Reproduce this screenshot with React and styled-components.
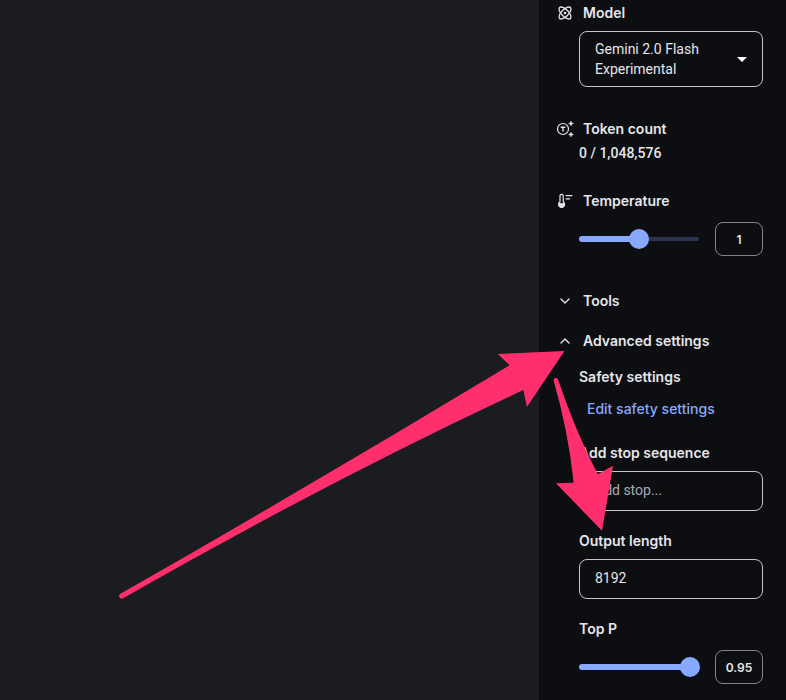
import { useState } from "react";
import styled, { createGlobalStyle } from "styled-components";
import { Atom, ChevronDown, ChevronUp } from "lucide-react";

const colors = {
    page: "#1b1c1f",
    panel: "#0d0e12",
    text: "#e6e6ea",
    muted: "#a9aab0",
    border: "#c4c6cc",
    softBorder: "#85868c",
    primary: "#87a9ff",
    rail: "#2c3350",
    arrow: "#ff2f6d",
};

const fonts = {
    body: 'Roboto, "Open Sans", sans-serif',
    label: 'Inter, "Open Sans", sans-serif',
};

const GlobalStyle = createGlobalStyle`
    * {
        box-sizing: border-box;
    }

    body {
        margin: 0;
        background: ${colors.page};
        color: ${colors.text};
        font-family: ${fonts.body};
        font-size: 14px;
        line-height: 20px;
    }

    button, input, select {
        font: inherit;
        color: inherit;
    }
`;

const PageWrapper = styled.div`
    position: relative;
    display: flex;
    min-height: 100vh;
    overflow: hidden;
`;

const Workspace = styled.main`
    flex: 1;
    background: ${colors.page};
`;

const Panel = styled.aside`
    display: flex;
    flex-direction: column;
    width: 247px;
    padding: 3px 23px 16px 18px;
    background: ${colors.panel};
`;

const Section = styled.section`
    display: flex;
    flex-direction: column;
    margin-bottom: ${(props) => props.$space}px;
`;

const SectionTitle = styled.h2`
    display: flex;
    align-items: center;
    gap: 10px;
    margin: 0;
    font-family: ${fonts.label};
    font-size: 14px;
    font-weight: 600;
    line-height: 20px;

    svg {
        flex: none;
        overflow: visible;
    }
`;

const ToggleButton = styled.button`
    display: flex;
    align-items: center;
    gap: 10px;
    padding: 0;
    border: none;
    background: none;
    cursor: pointer;
`;

const Content = styled.div`
    display: flex;
    flex-direction: column;
    gap: ${(props) => props.$gap || 0}px;
    margin: ${(props) => props.$top}px 0 0 22px;
`;

const SelectWrapper = styled.div`
    display: grid;
    align-items: center;

    > * {
        grid-area: 1 / 1;
    }

    svg {
        justify-self: end;
        margin-right: 16px;
        pointer-events: none;
    }
`;

const ModelSelect = styled.select`
    width: 100%;
    height: 56px;
    padding: 0 48px 0 15px;
    appearance: none;
    border: 1px solid ${colors.border};
    border-radius: 8px;
    background: transparent;
    line-height: 20px;
    white-space: normal;
`;

const TokenCount = styled.span`
    font-weight: 500;
`;

const Field = styled.div`
    display: flex;
    flex-direction: column;
    gap: 8px;
`;

const Label = styled.label`
    font-family: ${fonts.label};
    font-weight: 600;
`;

const Subtitle = styled.h3`
    margin: 0;
    font-family: ${fonts.label};
    font-size: 14px;
    font-weight: 600;
    line-height: 20px;
`;

const TextInput = styled.input`
    width: 100%;
    height: 40px;
    padding: 0 15px 2px;
    border: 1px solid ${colors.border};
    border-radius: 8px;
    background: transparent;

    &::placeholder {
        color: ${colors.muted};
        opacity: 1;
    }
`;

const EditButton = styled.button`
    align-self: flex-start;
    margin: 12px 0 24px;
    padding: 0 8px;
    border: none;
    background: none;
    color: ${colors.primary};
    font-family: ${fonts.label};
    font-weight: 500;
    cursor: pointer;
`;

const SliderRow = styled.div`
    display: flex;
    align-items: center;
    gap: 16px;
`;

const SliderBox = styled.div`
    display: grid;
    flex: 1;
    align-items: center;

    > * {
        grid-area: 1 / 1;
    }
`;

const Rail = styled.div`
    height: 4px;
    border-radius: 2px;
    background: ${colors.rail};
`;

const RailFill = styled.div`
    height: 6px;
    border-radius: 3px;
    background: ${colors.primary};
`;

const Slider = styled.input`
    min-width: 0;
    height: 20px;
    margin: 0 -7px;
    appearance: none;
    background: none;
    cursor: pointer;

    &::-webkit-slider-thumb {
        width: 20px;
        height: 20px;
        appearance: none;
        border-radius: 50%;
        background: ${colors.primary};
    }
`;

const ValueInput = styled.input`
    width: 48px;
    height: 34px;
    padding: 0;
    border: 1px solid ${colors.softBorder};
    border-radius: 8px;
    background: transparent;
    font-family: ${fonts.label};
    font-size: 12px;
    font-weight: 600;
    text-align: center;
`;

const Annotations = styled.svg`
    position: absolute;
    top: 0;
    right: 0;
    pointer-events: none;
`;

function TokenIcon() {
    return (
        <svg width="16" height="16" viewBox="0 0 16 16" fill="none" stroke="currentColor" aria-hidden="true">
            <circle cx="6" cy="8" r="5.5" strokeWidth="1.2" />
            <path d="M3.7 6.2h4.6M6 6.2v4.4" strokeWidth="1.4" />
            <path
                d="M14 0l.8 1.7 1.7.8-1.7.8L14 5l-.8-1.7-1.7-.8 1.7-.8zM14 11l.8 1.7 1.7.8-1.7.8L14 16l-.8-1.7-1.7-.8 1.7-.8z"
                fill="currentColor"
                strokeWidth=".4"
            />
        </svg>
    );
}

function TemperatureIcon() {
    return (
        <svg width="16" height="16" viewBox="0 0 16 16" fill="none" stroke="currentColor" aria-hidden="true">
            <path d="M3 8.8V2.9a1.6 1.6 0 0 1 3.2 0v5.9a3 3 0 1 1-3.2 0z" strokeWidth="1.2" />
            <path d="M1.8 10.6h5.6a2.9 2.9 0 1 1-5.6 0z" fill="currentColor" strokeWidth=".8" />
            <path d="M8.6 2.7h6.8M8.6 5.9h4.4" strokeWidth="1.3" />
        </svg>
    );
}

function ParameterSlider({ id, label, max, step, value, onChange }) {
    return (
        <SliderRow>
            <SliderBox>
                <Rail />
                <RailFill style={{ width: `${(value / max) * 100}%` }} />
                <Slider
                    id={id}
                    type="range"
                    min="0"
                    max={max}
                    step={step}
                    value={value}
                    onChange={(event) => onChange(event.target.value)}
                />
            </SliderBox>
            <ValueInput
                aria-label={`${label} value`}
                inputMode="decimal"
                value={value}
                onChange={(event) => onChange(event.target.value)}
            />
        </SliderRow>
    );
}

function App() {
    const [temperature, setTemperature] = useState("1");
    const [topP, setTopP] = useState("0.95");
    const [outputLength, setOutputLength] = useState("8192");
    const [toolsOpen, setToolsOpen] = useState(false);
    const [advancedOpen, setAdvancedOpen] = useState(true);

    return (
        <PageWrapper>
            <GlobalStyle />
            <Workspace />
            <Panel>
                <Section $space={32}>
                    <SectionTitle>
                        <Atom size={16} strokeWidth={2} />
                        <label htmlFor="model">Model</label>
                    </SectionTitle>
                    <Content $top={8}>
                        <SelectWrapper>
                            <ModelSelect id="model">
                                <option>Gemini 2.0 Flash Experimental</option>
                            </ModelSelect>
                            <svg width="10" height="5" viewBox="0 0 10 5" aria-hidden="true">
                                <path d="M0 0h10L5 5z" fill="#fff" />
                            </svg>
                        </SelectWrapper>
                    </Content>
                </Section>

                <Section $space={28}>
                    <SectionTitle>
                        <TokenIcon />
                        Token count
                    </SectionTitle>
                    <Content $top={4}>
                        <TokenCount>0 / 1,048,576</TokenCount>
                    </Content>
                </Section>

                <Section $space={35}>
                    <SectionTitle>
                        <TemperatureIcon />
                        <label htmlFor="temperature">Temperature</label>
                    </SectionTitle>
                    <Content $top={11}>
                        <ParameterSlider
                            id="temperature"
                            label="Temperature"
                            max={2}
                            step={0.05}
                            value={temperature}
                            onChange={setTemperature}
                        />
                    </Content>
                </Section>

                <Section $space={20}>
                    <SectionTitle>
                        <ToggleButton aria-expanded={toolsOpen} onClick={() => setToolsOpen(!toolsOpen)}>
                            {toolsOpen ? <ChevronUp size={16} /> : <ChevronDown size={16} />}
                            Tools
                        </ToggleButton>
                    </SectionTitle>
                </Section>

                <Section $space={0}>
                    <SectionTitle>
                        <ToggleButton aria-expanded={advancedOpen} onClick={() => setAdvancedOpen(!advancedOpen)}>
                            {advancedOpen ? <ChevronUp size={16} /> : <ChevronDown size={16} />}
                            Advanced settings
                        </ToggleButton>
                    </SectionTitle>
                    {advancedOpen && (
                        <>
                            <Content $top={16}>
                                <Subtitle>Safety settings</Subtitle>
                                <EditButton>Edit safety settings</EditButton>
                            </Content>
                            <Content $top={0} $gap={20}>
                                <Field>
                                    <Label htmlFor="stop">Add stop sequence</Label>
                                    <TextInput id="stop" placeholder="Add stop..." />
                                </Field>
                                <Field>
                                    <Label htmlFor="length">Output length</Label>
                                    <TextInput
                                        id="length"
                                        inputMode="numeric"
                                        value={outputLength}
                                        onChange={(event) => setOutputLength(event.target.value)}
                                    />
                                </Field>
                            </Content>
                            <Content $top={20} $gap={11}>
                                <Label htmlFor="top-p">Top P</Label>
                                <ParameterSlider
                                    id="top-p"
                                    label="Top P"
                                    max={1}
                                    step={0.05}
                                    value={topP}
                                    onChange={setTopP}
                                />
                            </Content>
                        </>
                    )}
                </Section>
            </Panel>

            <Annotations width="786" height="700" viewBox="0 0 786 700" fill={colors.arrow} aria-hidden="true">
                <path d="M120.4 593.8Q318 481 509.7 365.3L497.7 354 564.5 351 527 406.7 523.3 390Q330 480 123 598.2A2.5 2.5 0 0 1 120.4 593.8z" />
                <path d="M553.6 380.6Q568 430 573.7 482.7L556 483.3 602 530.8 613 465.7 597.7 474.3Q575 430 558 379.4A2.3 2.3 0 0 0 553.6 380.6z" />
            </Annotations>
        </PageWrapper>
    );
}

export default App;
